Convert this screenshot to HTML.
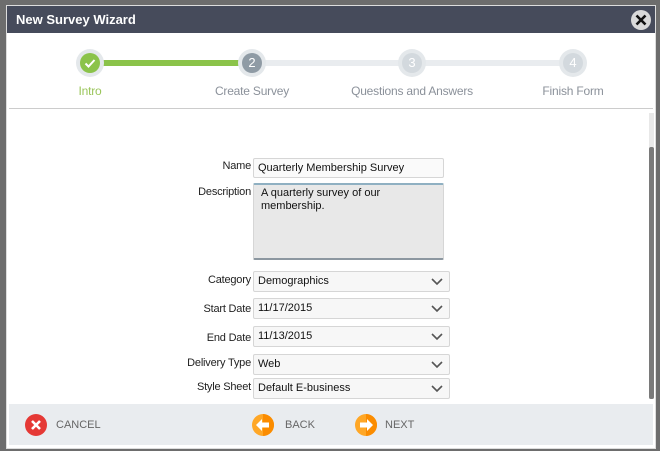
<!DOCTYPE html>
<html><head><style>
*{margin:0;padding:0;box-sizing:border-box}
body{width:660px;height:451px;background:#6d6d6d;font-family:"Liberation Sans",sans-serif;position:relative;overflow:hidden}
.dlg{position:absolute;left:6px;top:5px;width:650px;height:444px;background:#fff;border:1px solid #ddd}
.hdr{position:absolute;left:0;top:0;width:648px;height:27px;background:#464b5b;color:#fff;font-weight:bold;font-size:13px;line-height:27px;padding-left:9px}
.close{position:absolute;left:624px;top:4px;width:20px;height:20px;border-radius:50%;background:#d9d9d9}
.abs{position:absolute}
.lbl{position:absolute;font-size:11px;color:#222;text-align:right;width:120px;letter-spacing:-0.2px}
.inp{position:absolute;border:1px solid #d6d6d6;border-radius:2px;background:#f7f7f7;font-size:11px;color:#111;padding-left:4px;line-height:18px}
.sel svg{position:absolute;right:6px;top:6px}
.step{position:absolute;width:28px;height:28px;border-radius:50%;background:#e4e8eb}
.step div{position:absolute;left:4px;top:4px;width:20px;height:20px;border-radius:50%;color:#fff;font-size:13px;text-align:center;line-height:20px}
.sl{position:absolute;font-size:12px;color:#8b919a;text-align:center;width:160px;letter-spacing:-0.2px}
.foot{position:absolute;left:2px;top:398px;width:644px;height:41px;background:#e9ecef}
.btn{position:absolute;font-size:11px;color:#666;top:15px}
</style></head><body>
<div class="dlg">
<div class="hdr">New Survey Wizard</div>
<div class="close"><svg width="20" height="20"><path d="M5.5 5.5L14.5 14.5M14.5 5.5L5.5 14.5" stroke="#111" stroke-width="2.6"/></svg></div>
<div class="abs" style="left:83px;top:54px;width:162px;height:6px;background:#8bc34a"></div>
<div class="abs" style="left:245px;top:54px;width:322px;height:6px;background:#e9ecef"></div>
<div class="step" style="left:69px;top:43px"><div style="background:#8bc34a"><svg width="20" height="20"><path d="M5.5 10.5L8.5 13.5L14.5 7" stroke="#fff" stroke-width="2" fill="none"/></svg></div></div>
<div class="step" style="left:231px;top:43px"><div style="background:#8f9ba5">2</div></div>
<div class="step" style="left:391px;top:43px"><div style="background:#d3d9de">3</div></div>
<div class="step" style="left:552px;top:43px"><div style="background:#d3d9de">4</div></div>
<div class="sl" style="left:3px;top:78px;color:#9ac55a">Intro</div>
<div class="sl" style="left:165px;top:78px">Create Survey</div>
<div class="sl" style="left:325px;top:78px">Questions and Answers</div>
<div class="sl" style="left:486px;top:78px">Finish Form</div>
<div class="abs" style="left:2px;top:102px;width:644px;height:1px;background:#ccc"></div>
<div class="abs" style="left:642px;top:107px;width:5px;height:286px;background:#e8e8e8"></div>
<div class="abs" style="left:642px;top:141px;width:5px;height:252px;background:#7a7a7a;border-radius:2px"></div>

<div class="lbl" style="left:124px;top:154px">Name</div>
<div class="inp" style="left:246px;top:152px;width:191px;height:20px;background:#fafafa">Quarterly Membership Survey</div>
<div class="lbl" style="left:124px;top:180px">Description</div>
<div class="inp" style="left:246px;top:177px;width:191px;height:77px;background:#e8e8e8;border-top:2px solid #8fb0c2;border-bottom:2px solid #8c97a0;line-height:13px;padding:2px 8px 0 7px">A quarterly survey of our membership.</div>

<div class="lbl" style="left:124px;top:268px">Category</div>
<div class="inp sel" style="left:246px;top:265px;width:197px;height:21px">Demographics<svg width="12" height="8"><path d="M1 1L6 6L11 1" stroke="#555" stroke-width="1.6" fill="none"/></svg></div>
<div class="lbl" style="left:124px;top:297px">Start Date</div>
<div class="inp sel" style="left:246px;top:292px;width:197px;height:21px">11/17/2015<svg width="12" height="8"><path d="M1 1L6 6L11 1" stroke="#555" stroke-width="1.6" fill="none"/></svg></div>
<div class="lbl" style="left:124px;top:326px">End Date</div>
<div class="inp sel" style="left:246px;top:320px;width:197px;height:21px">11/13/2015<svg width="12" height="8"><path d="M1 1L6 6L11 1" stroke="#555" stroke-width="1.6" fill="none"/></svg></div>
<div class="lbl" style="left:124px;top:351px">Delivery Type</div>
<div class="inp sel" style="left:246px;top:348px;width:197px;height:21px">Web<svg width="12" height="8"><path d="M1 1L6 6L11 1" stroke="#555" stroke-width="1.6" fill="none"/></svg></div>
<div class="lbl" style="left:124px;top:375px">Style Sheet</div>
<div class="inp sel" style="left:246px;top:372px;width:197px;height:21px">Default E-business<svg width="12" height="8"><path d="M1 1L6 6L11 1" stroke="#555" stroke-width="1.6" fill="none"/></svg></div>

<div class="foot">
<svg class="abs" style="left:16px;top:10px" width="22" height="22"><circle cx="11" cy="11" r="11" fill="#e53935"/><path d="M7 7L15 15M15 7L7 15" stroke="#fff" stroke-width="2.6"/></svg>
<div class="btn" style="left:47px">CANCEL</div>
<svg class="abs" style="left:243px;top:10px" width="22" height="22"><circle cx="11" cy="11" r="11" fill="#ffa726"/><path d="M11 0A11 11 0 0 1 11 22Z" fill="#fb8c00"/><path d="M4 11L10 5V8.5H17V13.5H10V17Z" fill="#fff"/></svg>
<div class="btn" style="left:276px">BACK</div>
<svg class="abs" style="left:346px;top:10px" width="22" height="22"><circle cx="11" cy="11" r="11" fill="#ffa726"/><path d="M11 0A11 11 0 0 1 11 22Z" fill="#fb8c00"/><path d="M18 11L12 5V8.5H5V13.5H12V17Z" fill="#fff"/></svg>
<div class="btn" style="left:376px">NEXT</div>
</div>
</div>
</body></html>
